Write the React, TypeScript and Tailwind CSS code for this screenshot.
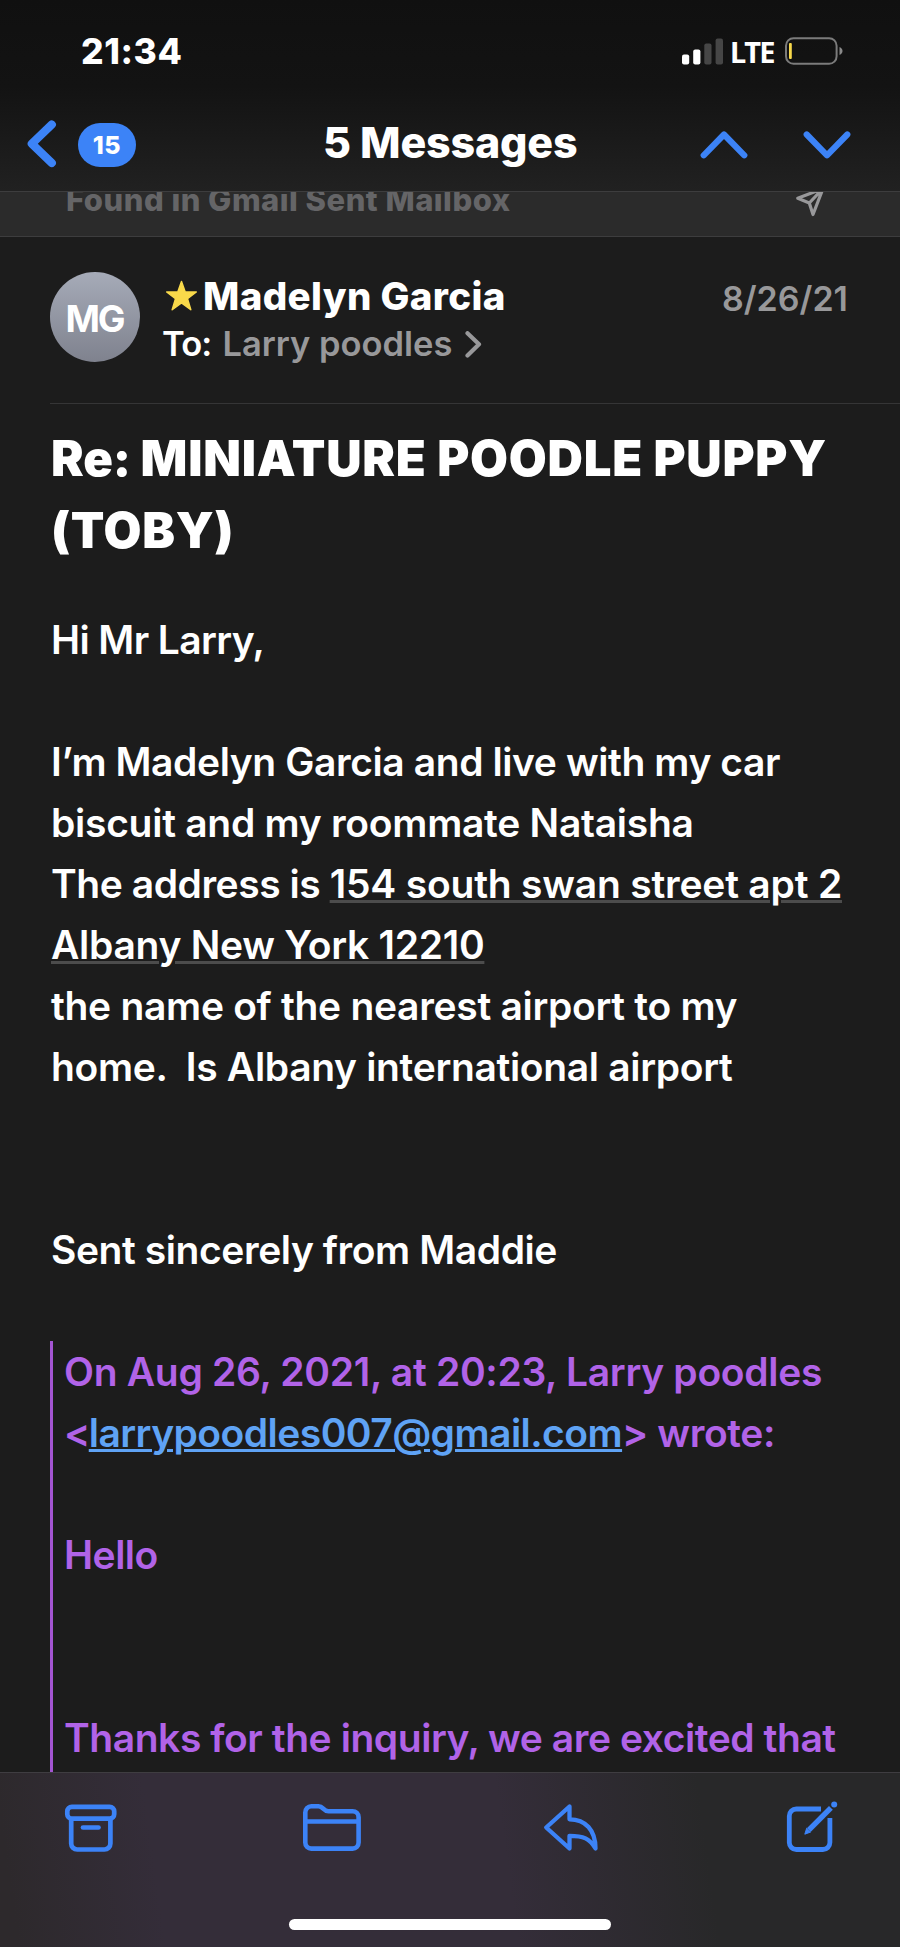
import type { ReactNode } from 'react';

function StatusBar() {
  return (
    <div className="flex h-[102px] items-center pl-[81px] pr-[57px]">
      <span className="mt-[2px] flex-1 text-[35.5px] font-extrabold leading-none tracking-[0.6px]">21:34</span>
      <svg width="42" height="27" viewBox="0 0 42 27" className="mr-[6px]">
        <rect x="0" y="16.5" width="7.2" height="10" rx="2" fill="#fff" />
        <rect x="11.2" y="11.5" width="7.2" height="15" rx="2" fill="#fff" />
        <rect x="22.3" y="5.5" width="7.2" height="21" rx="2" fill="#464646" />
        <rect x="33.6" y="0.5" width="7.4" height="26" rx="2" fill="#464646" />
      </svg>
      <span className="mr-[11px] w-[44px] whitespace-nowrap font-['Noto_Sans'] text-[29px] font-bold leading-none tracking-[-1.5px]">LTE</span>
      <svg width="58" height="28" viewBox="0 0 58 28">
        <rect x="1" y="1.2" width="50.6" height="25.6" rx="7.5" fill="none" stroke="#7b7b7b" strokeWidth="2" />
        <rect x="4" y="6" width="2.8" height="16" rx="1" fill="#f7d84b" />
        <path d="M54.5 10c4 1.5 4 6.5 0 8z" fill="#8a8a8a" />
      </svg>
    </div>
  );
}

function NavBar() {
  return (
    <div className="grid h-[89px] grid-cols-[323px_1fr_320px] items-start">
      <div className="flex h-[84px] items-center pl-[27px]">
        <svg width="30" height="48" viewBox="0 0 30 48" fill="none" stroke="#3c83f7" strokeWidth="8.2" strokeLinecap="round" strokeLinejoin="round">
          <path d="M24.8 4.5L4.8 23.7L24.8 43" />
        </svg>
        <span className="ml-[21px] mt-[2px] flex h-[44px] w-[58px] items-center justify-center rounded-full bg-[#3c83f7] text-[25px] font-extrabold leading-none tracking-[0.5px]">15</span>
      </div>
      <h1 className="h-[82px] whitespace-nowrap text-[43px] font-extrabold leading-[80px] tracking-[-0.2px]">5 Messages</h1>
      <div className="flex h-[86px] items-center justify-end gap-[55px] pr-[49px]">
        <svg width="48" height="28" viewBox="0 0 48 28" fill="none" stroke="#3c83f7" strokeWidth="6.2" strokeLinecap="round" strokeLinejoin="round">
          <path d="M3.7 24.3L24 3.5L44.3 24.3" />
        </svg>
        <svg width="48" height="28" viewBox="0 0 48 28" fill="none" stroke="#3c83f7" strokeWidth="6.2" strokeLinecap="round" strokeLinejoin="round">
          <path d="M3.7 3.5L24 24.3L44.3 3.5" />
        </svg>
      </div>
    </div>
  );
}

function MailboxStrip() {
  return (
    <div className="flex h-[46px] items-start justify-between overflow-hidden border-y border-[#3d3d3e] bg-[#2b2b2b] pl-[66px] pr-[74px]">
      <span className="-mt-[12px] whitespace-nowrap text-[31px] font-extrabold leading-[40px] tracking-[0.48px] text-[#656567]">Found in Gmail Sent Mailbox</span>
      <svg width="30" height="32" viewBox="0 0 30 32" className="-mt-[6px]" fill="none" stroke="#98989a" strokeWidth="3.2" strokeLinejoin="round" strokeLinecap="round">
        <path d="M27 2.5L1.8 12.3L13.3 17L17 28.5L27 2.5L13.3 17" />
      </svg>
    </div>
  );
}

function SenderRow() {
  return (
    <div className="flex h-[116px] pr-[52px]">
      <div className="flex size-[90px] items-center justify-center rounded-full bg-linear-to-b from-[#a6abb8] to-[#7f828e] text-[37px] font-bold leading-none tracking-[-2px]">
        <span className="pr-[1px] pt-[4px]">MG</span>
      </div>
      <div className="ml-[22px] flex-1">
        <div className="flex h-[49px] items-center">
          <svg width="33" height="32" viewBox="0 0 33 32" className="ml-[3px] mr-[5px]">
            <path d="M16.5 1.5L20.2 12H31.3L22.5 18.7L25.8 29.7L16.5 23L7.2 29.7L10.5 18.7L1.7 12H12.8Z" fill="#f9d94a" stroke="#f9d94a" strokeWidth="1.5" strokeLinejoin="round" />
          </svg>
          <span className="whitespace-nowrap text-[38.5px] font-extrabold leading-[49px] tracking-[0.35px]">Madelyn Garcia</span>
        </div>
        <div className="mt-px flex h-[45px] items-center whitespace-nowrap text-[34.5px] font-semibold leading-[46px]">
          <span className="tracking-[-0.9px]">To:</span>
          <span className="ml-[11px] text-[#98989a]">Larry poodles</span>
          <svg width="17" height="27" viewBox="0 0 17 27" className="ml-[13px]" fill="none" stroke="#98989a" strokeWidth="4.2" strokeLinecap="round" strokeLinejoin="round">
            <path d="M2.5 2.2L14 13.2L2.5 24.5" />
          </svg>
        </div>
      </div>
      <span className="h-[50px] text-[34px] font-semibold leading-[54px] text-[#98989a]">8/26/21</span>
    </div>
  );
}

function Line({ className, children }: { className?: string; children?: ReactNode }) {
  return <p className={`h-[61px] whitespace-pre ${className ?? ''}`}>{children}</p>;
}

function MessageBody() {
  return (
    <div className="pl-[51px] text-[39px] font-semibold leading-[61px]">
      <Line className="tracking-[-0.6px]">Hi Mr Larry,</Line>
      <Line />
      <Line className="tracking-[-0.41px]">I’m Madelyn Garcia and live with my car</Line>
      <Line className="tracking-[-0.27px]">biscuit and my roommate Nataisha</Line>
      <Line className="tracking-[-0.45px]">The address is <span className="tracking-[-0.2px] underline decoration-[#4c4c4c] decoration-[3px] underline-offset-[2px]">154 south swan street apt 2</span></Line>
      <Line className="tracking-[-0.29px]"><span className="underline decoration-[#4c4c4c] decoration-[3px] underline-offset-[2px]">Albany New York 12210</span></Line>
      <Line className="tracking-[-0.3px]">the name of the nearest airport to my</Line>
      <Line className="tracking-[-0.33px]">home.  Is Albany international airport</Line>
      <Line />
      <Line />
      <Line className="tracking-[-0.42px]">Sent sincerely from Maddie</Line>
      <Line />
    </div>
  );
}

function Quote() {
  return (
    <blockquote className="ml-[50px] h-[440px] border-l-[3px] border-[#a355d2] pl-[11px] text-[39px] font-semibold leading-[61px] text-[#b163e8]">
      <Line className="tracking-[-0.3px]">On Aug 26, 2021, at 20:23, Larry poodles</Line>
      <Line className="tracking-[-1.5px]">&lt;<span className="tracking-[-0.54px] text-[#5fa3f5] underline decoration-[3px] underline-offset-[2px]">larrypoodles007@gmail.com</span><span className="tracking-[-0.4px]">&gt; wrote:</span></Line>
      <Line />
      <Line className="tracking-[-0.5px]">Hello</Line>
      <Line />
      <Line />
      <Line className="tracking-[-0.44px]">Thanks for the inquiry, we are excited that</Line>
    </blockquote>
  );
}

function Toolbar() {
  return (
    <div className="flex h-[176px] flex-col items-center border-t border-[#3f3d41] bg-linear-[82deg] from-[#2d292c] from-2% via-[#342d39] via-18% to-[#342d39] to-54%">
      <div className="flex h-full w-full flex-col items-center bg-linear-[82deg] from-transparent from-56% to-[#282829] to-78%">
        <div className="flex w-full justify-between pl-[64px] pr-[60px] pt-[28px] text-[#3c83f7]">
          <svg width="54" height="54" viewBox="0 0 54 54" fill="none" stroke="currentColor" strokeWidth="4.7" strokeLinecap="round" strokeLinejoin="round">
            <rect x="3.3" y="5.8" width="46.9" height="11.9" rx="4.5" />
            <path d="M7.2 18V42.5A6 6 0 0 0 13.2 48.5H40.4A6 6 0 0 0 46.4 42.5V18" />
            <path d="M19 26.5H34.5" />
          </svg>
          <svg width="60" height="54" viewBox="-1 0 60 54" fill="none" stroke="currentColor" strokeWidth="4.6" strokeLinejoin="round">
            <path d="M3.3 41.5V11.5A6 6 0 0 1 9.3 5.3H16.5C21.5 5.3 21 10.2 26.5 10.2H50.6A6 6 0 0 1 56.6 16.2V41.6A6 6 0 0 1 50.6 47.6H9.3A6 6 0 0 1 3.3 41.5Z" />
            <path d="M3.3 20.5H56.6" />
          </svg>
          <svg width="58" height="54" viewBox="1 0 58 54" fill="none" stroke="currentColor" strokeWidth="4.3" strokeLinejoin="round">
            <path d="M4.2 26.5L27.5 5.5V18.3C43.5 18.3 53.5 29 53.5 47.5C47.5 37.5 41.5 34.8 27.5 34.8V47.5Z" />
          </svg>
          <svg width="56" height="54" viewBox="0 0 56 54" fill="none" stroke="currentColor" strokeWidth="4.8">
            <path d="M37 8H12.3A7 7 0 0 0 5.3 15V41.5A7 7 0 0 0 12.3 48.5H38.9A7 7 0 0 0 45.9 41.5V17" />
            <path d="M46.9 6.9L25 28.8" strokeWidth="5.4" />
            <path d="M22.7 27.2L26.7 31L20.8 33.2Z" fill="currentColor" strokeWidth="1" strokeLinejoin="round" />
            <circle cx="50.2" cy="3.6" r="3" fill="currentColor" stroke="none" />
          </svg>
        </div>
        <div className="mt-[64px] h-[11px] w-[322px] rounded-full bg-white" />
      </div>
    </div>
  );
}

export default function App() {
  return (
    <div className="flex h-[1947px] w-[900px] flex-col overflow-hidden bg-[#1c1c1c] font-['Inter','Liberation_Sans',sans-serif] text-white">
      <header className="h-[191px] shrink-0 bg-linear-to-b from-[#101010] via-[#131313] via-45% to-[#212121]">
        <StatusBar />
        <NavBar />
      </header>
      <MailboxStrip />
      <main className="h-[1535px] shrink-0 overflow-hidden">
        <div className="ml-[50px] border-b border-[#353536] pt-[35px]">
          <div className="h-[131px]">
            <SenderRow />
          </div>
        </div>
        <h2 className="whitespace-nowrap pl-[51px] pt-[19px] text-[49px] font-black leading-[72px] tracking-[0.75px]">
          <span className="block"><span className="tracking-[-0.1px]">Re: </span>MINIATURE POODLE PUPPY</span>
          <span className="block">(TOBY)</span>
        </h2>
        <div className="h-[42px]" />
        <MessageBody />
        <Quote />
      </main>
      <Toolbar />
    </div>
  );
}
